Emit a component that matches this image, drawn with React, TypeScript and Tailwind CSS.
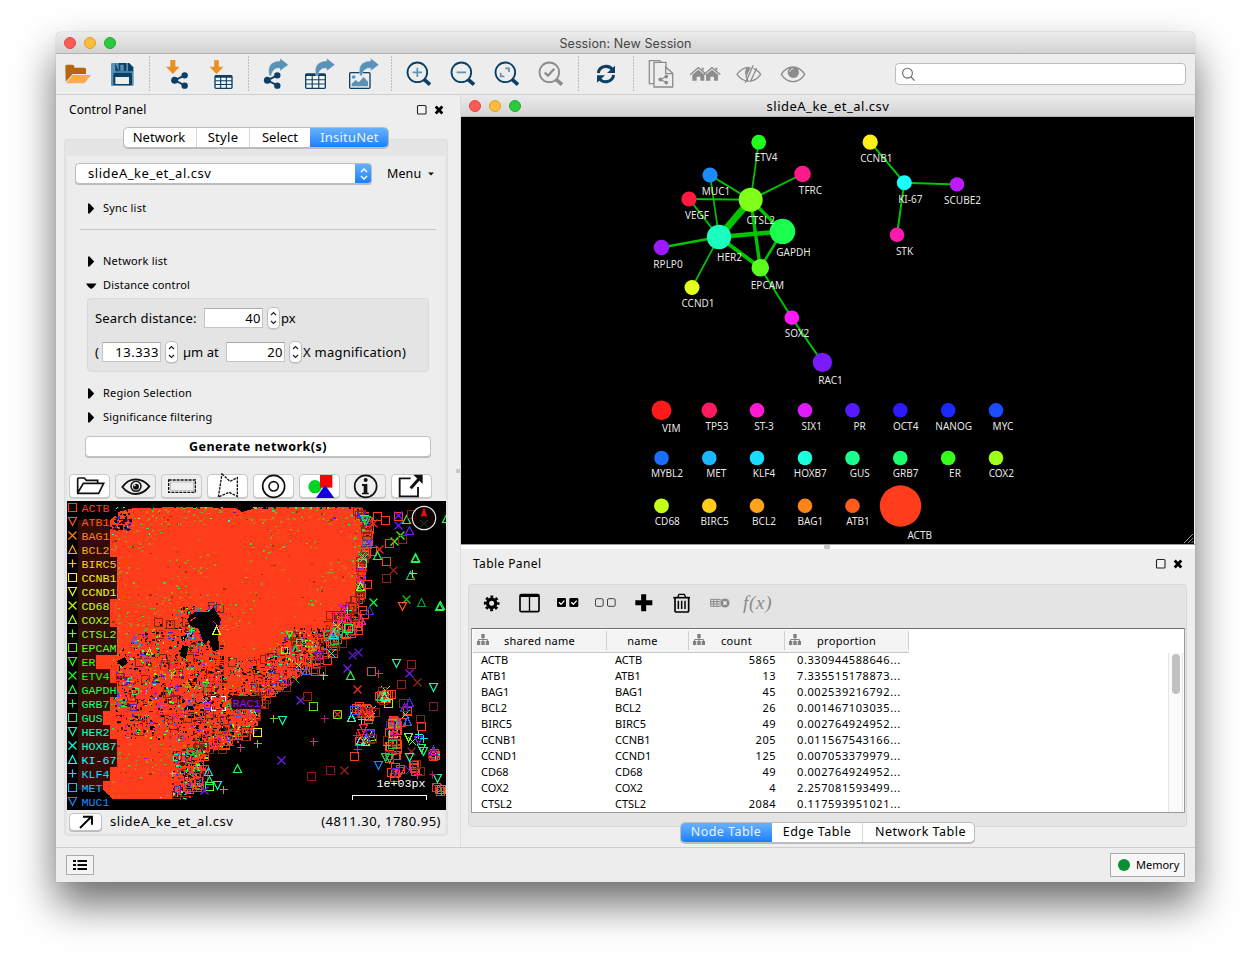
import React from "react";

const FONT = 'font-["Noto_Sans",sans-serif]';

/* ---------- small building blocks ---------- */

type ArtProps = { x: number; y: number; w: number; h: number; ox: number; oy: number; children: React.ReactNode };

/* Drawing surface w×h pixels whose user units are a third of a pixel, counted from (ox, oy). */
function Art({ x, y, w, h, ox, oy, children }: ArtProps) {
  return (
    <svg className="block shrink-0" width={w} height={h} viewBox={`${(x - ox) * 3} ${(y - oy) * 3} ${w * 3} ${h * 3}`}>
      {children}
    </svg>
  );
}

function Lights() {
  return (
    <div className="flex gap-2">
      <span className="size-3 rounded-full border border-[#e14640] bg-[#fc5b57]" />
      <span className="size-3 rounded-full border border-[#dfa023] bg-[#fdbc3e]" />
      <span className="size-3 rounded-full border border-[#1dac2b] bg-[#2bc840]" />
    </div>
  );
}

function PanelButtons() {
  return (
    <svg className="block" width="30" height="12" viewBox="0 0 30 12">
      <rect x="1.5" y="1.5" width="8.5" height="8.5" rx="1" fill="#f4f4f4" stroke="#222" strokeWidth="1.1" />
      <path d="M19.7 2.600l6.600 6.800M26.300 2.600l-6.600 6.800" stroke="#000" strokeWidth="2.8" />
    </svg>
  );
}

function Stepper() {
  return (
    <span className="flex h-[22px] w-[13px] items-center justify-center rounded-[5px] border border-[#bcbcbc] bg-white shadow-[0_1px_0_#d0d0d0]">
      <svg width="7" height="14" viewBox="0 0 7 14" fill="none" stroke="#222" strokeWidth="1.2">
        <path d="M1 4l2.5-2.5L6 4M1 10l2.5 2.5L6 10" />
      </svg>
    </span>
  );
}

function Field({ value }: { value: string }) {
  return (
    <span className="flex h-5 w-[59px] items-center justify-end border border-t-[#a9a9a9] border-[#c4c4c4] bg-white pt-[2px] pr-[1px] text-[13px] tracking-[0.5px]">
      {value}
    </span>
  );
}

function Disclosure({ open, label }: { open?: boolean; label: string }) {
  return (
    <div className="flex h-6 items-center">
      <svg className="mr-[6px] ml-px block" width="11" height="11" viewBox="0 0 11 11">
        {open ? <path d="M0 3.500h10.500L8 7 5.200 9 2.500 7z" /> : <path d="M2 .500v10h1.500L8.200 5.500 3.500 .500z" />}
      </svg>
      <span className="text-[11px] tracking-[0.2px]">{label}</span>
    </div>
  );
}

/* ---------- main toolbar ---------- */

const NAVY = "#0b3f66";
const STEEL = "#5a93b8";
const ORANGE = "#ea9020";
const GREY = "#8c8c8c";

function Sep() {
  return (
    <svg className="block shrink-0" width="3" height="40" viewBox="0 0 3 40">
      <path d="M1.5 2.5v34" stroke="#8a8a8a" strokeWidth="1" strokeDasharray="1 2" />
    </svg>
  );
}

function ShareShape({ dx = 0, dy = 0, s = 1, color = NAVY }: { dx?: number; dy?: number; s?: number; color?: string }) {
  return (
    <g transform={`translate(${dx} ${dy}) scale(${s})`} fill={color} stroke={color}>
      <path d="M41 10L11 25L41 40" fill="none" strokeWidth="5.5" />
      <circle cx="41" cy="10" r="9.5" stroke="none" />
      <circle cx="11" cy="25" r="10.5" stroke="none" />
      <circle cx="41" cy="41" r="9.5" stroke="none" />
    </g>
  );
}

function GridShape({ x, y, w, h }: { x: number; y: number; w: number; h: number }) {
  return (
    <g stroke={NAVY} strokeWidth="4" fill="#f6f6f6">
      <rect x={x} y={y} width={w} height={h} rx="3" />
      <path d={`M${x} ${y + 3}h${w}`} strokeWidth="6" />
      <path d={`M${x + w / 3} ${y}v${h}M${x + (2 * w) / 3} ${y}v${h}M${x} ${y + h * 0.4}h${w}M${x} ${y + h * 0.7}h${w}`} strokeWidth="3.4" />
    </g>
  );
}

function BendArrow({ dx }: { dx: number }) {
  return (
    <path
      transform={`translate(${dx} 0)`}
      d="M658 152C652 126 660 109 690 108V100L715 119L690 138V130C676 128 666 136 664 152Z"
      fill={STEEL}
      stroke="#eee"
      strokeWidth="1"
    />
  );
}

function Lens({ cx, color, children }: { cx: number; color: string; children: React.ReactNode }) {
  return (
    <g fill="none">
      <path d={`M${cx + 20} 163L${cx + 38} 179`} stroke={color} strokeWidth="11" />
      <circle cx={cx} cy="142" r="29.5" stroke={color} strokeWidth="5.5" />
      {children}
    </g>
  );
}

function Toolbar() {
  return (
    <div className="flex h-[41px] shrink-0 items-start border-b border-[#cfcfcf] bg-[#ededed]">
      <Art x={56} y={54} w={44} h={40} ox={50} oy={25}>
        <path d="M46 124q0-5 5-5h16q5 0 6 5v4h30q5 0 5 5v14H68L47 170z" fill="#b5660f" />
        <path d="M68 150h55L107 171q-3 4-8 4H48z" fill="#fbab52" />
      </Art>
      <Art x={100} y={54} w={48} h={40} ox={50} oy={25}>
        <path d="M186 114h52l13 13v52q0 4-4 4h-60q-4 0-4-4v-61q0-4 3-4z" fill={STEEL} />
        <path d="M196 114h41l12 13v12h-53z" fill={NAVY} />
        <path d="M196 114h10v24h28v-24h-5v23h-24z" fill={STEEL} />
        <path d="M211 119h10v18h-10z" fill={STEEL} />
        <path d="M190 147q0-4 4-4h48q4 0 4 4v33h-56z" fill={NAVY} />
        <path d="M196 156h41v21h-41z" fill="#eee" />
      </Art>
      <Sep />
      <Art x={151} y={54} w={50} h={40} ox={50} oy={25}>
        <path d="M361 105h15v20h13L368.500 147L348 125h13z" fill={ORANGE} />
        <ShareShape dx={363} dy={141} />
      </Art>
      <Art x={201} y={54} w={46} h={40} ox={50} oy={25}>
        <GridShape x={495} y={152} w={51} h={38} />
        <path d="M492 105h15v20h14L499.500 148L478 125h14z" fill={ORANGE} stroke="#eee" strokeWidth="1" />
      </Art>
      <Sep />
      <Art x={250} y={54} w={48} h={40} ox={50} oy={25}>
        <ShareShape dx={641} dy={141} />
        <BendArrow dx={0} />
      </Art>
      <Art x={298} y={54} w={44} h={40} ox={50} oy={25}>
        <GridShape x={767} y={147} w={59} h={43} />
        <BendArrow dx={140} />
      </Art>
      <Art x={342} y={54} w={48} h={40} ox={50} oy={25}>
        <rect x="899" y="143" width="61" height="47" rx="3" fill="none" stroke={NAVY} strokeWidth="4" />
        <circle cx="911" cy="156" r="5.500" fill={STEEL} />
        <path d="M905 184v-8l12-11 9 7 15-16 13 14v14z" fill={STEEL} />
        <BendArrow dx={272} />
      </Art>
      <Sep />
      <Art x={393} y={54} w={48} h={40} ox={380} oy={25}>
        <Lens cx={112} color={NAVY}><path d="M98 142h28M112 128v28" stroke={STEEL} strokeWidth="5" /></Lens>
      </Art>
      <Art x={441} y={54} w={44} h={40} ox={380} oy={25}>
        <Lens cx={244} color={NAVY}><path d="M230 142h28" stroke={STEEL} strokeWidth="5" /></Lens>
      </Art>
      <Art x={485} y={54} w={44} h={40} ox={380} oy={25}>
        <Lens cx={376} color={NAVY}><path d="M376 130h11v11M373 154h-11v-11" stroke={STEEL} strokeWidth="5" /></Lens>
      </Art>
      <Art x={529} y={54} w={48} h={40} ox={380} oy={25}>
        <Lens cx={508} color={GREY}><path d="M494 143l10 9 19-21" stroke={GREY} strokeWidth="7" /></Lens>
      </Art>
      <Sep />
      <Art x={580} y={54} w={52} h={40} ox={380} oy={25}>
        <g fill="none" stroke={NAVY} strokeWidth="9">
          <path d="M655 144C658 122 686 118 698 134" />
          <path d="M701 150C697 173 670 176 657 160" />
        </g>
        <path d="M705 122v22h-24z" fill={NAVY} />
        <path d="M651 173v-22h24z" fill={NAVY} />
      </Art>
      <Sep />
      <Art x={635} y={54} w={48} h={40} ox={380} oy={25}>
        <g fill="#ededed" stroke={GREY} strokeWidth="4">
          <path d="M822 176h-14v-69h31l9 9" />
          <path d="M822 112h36v15l20 18v41h-56z" />
          <path d="M838 112v0M857 124v22h21" fill="none" />
        </g>
        <ShareShape dx={835} dy={149} s={0.58} color={GREY} />
      </Art>
      <Art x={683} y={54} w={44} h={40} ox={380} oy={25}>
        {[0, 41].map((d) => (
          <g key={d} transform={`translate(${d} 0)`} fill={GREY}>
            <path d="M937 149l18-15 18 15v18h-12v-12h-11v12h-13z" />
            <path d="M930 149l25-21 25 21" fill="none" stroke={GREY} strokeWidth="4" />
            <path d="M965 128h6v10l-6-5z" />
          </g>
        ))}
      </Art>
      <Art x={727} y={54} w={44} h={40} ox={380} oy={25}>
        <path d="M1071 148Q1085 128 1107 127Q1098 130 1098 142Q1097 157 1104 168Q1085 167 1071 148z" fill="none" stroke={GREY} strokeWidth="4" />
        <path d="M1121 130Q1135 137 1142 148Q1130 166 1108 169" fill="none" stroke={GREY} strokeWidth="4" />
        <path d="M1120 121L1096 173M1130 130L1112 168" stroke={GREY} strokeWidth="4" />
        <path d="M1098 134q8-8 15-7l-13 26q-7-9-2-19z" fill={GREY} />
      </Art>
      <Art x={771} y={54} w={44} h={40} ox={380} oy={25}>
        <path d="M1204 148Q1218 126 1239 126T1274 148Q1260 170 1239 170T1204 148z" fill="none" stroke={GREY} strokeWidth="4" />
        <circle cx="1240" cy="142" r="17" fill={GREY} />
        <path d="M1229 141q1-10 11-10" fill="none" stroke="#eee" strokeWidth="2.500" />
      </Art>
      <div className="flex-1" />
      <div className="mt-[9px] mr-[9px] flex h-[22px] w-[291px] items-center rounded border border-[#bdbdbd] bg-white pl-[5px]">
        <svg width="15" height="15" viewBox="0 0 15 15" fill="none" stroke="#666" strokeWidth="1.1">
          <circle cx="6.500" cy="6.200" r="4.900" />
          <path d="M10 10l3.600 3.600" />
        </svg>
      </div>
    </div>
  );
}

/* ---------- gene palette ---------- */

const GENES: [string, string][] = [
  ["ACTB", "#ff3d1a"], ["ATB1", "#ff5c1a"], ["BAG1", "#ff841a"], ["BCL2", "#ffa41a"], ["BIRC5", "#ffcc1a"],
  ["CCNB1", "#fff01a"], ["CCND1", "#e6ff1a"], ["CD68", "#c4ff1a"], ["COX2", "#a0ff1a"], ["CTSL2", "#80ff1a"],
  ["EPCAM", "#59ff1a"], ["ER", "#36ff1a"], ["ETV4", "#1aff1e"], ["GAPDH", "#1aff4d"], ["GRB7", "#1aff6e"],
  ["GUS", "#1aff90"], ["HER2", "#1affc0"], ["HOXB7", "#1affdc"], ["KI-67", "#1affff"], ["KLF4", "#1adcff"],
  ["MET", "#1ab8ff"], ["MUC1", "#1a8cff"],
];

/* ---------- spatial plot ---------- */

type Kind = "s" | "v" | "x" | "t" | "p";

function glyph(k: Kind, x: number, y: number, r = 4) {
  if (k === "s") return `M${x - r} ${y - r}h${2 * r}v${2 * r}h${-2 * r}z`;
  if (k === "v") return `M${x - r} ${y - r}h${2 * r}l${-r} ${2 * r}z`;
  if (k === "t") return `M${x - r} ${y + r}h${2 * r}l${-r} ${-2 * r}z`;
  if (k === "x") return `M${x - r} ${y - r}l${2 * r} ${2 * r}m0 ${-2 * r}l${-2 * r} ${2 * r}`;
  return `M${x - r} ${y}h${2 * r}M${x} ${y - r}v${2 * r}`;
}

function rng(seed: number) {
  let a = seed;
  return () => {
    a = (a + 0x6d2b79f5) | 0;
    let t = Math.imul(a ^ (a >>> 15), 1 | a);
    t = (t + Math.imul(t ^ (t >>> 7), 61 | t)) ^ t;
    return ((t ^ (t >>> 14)) >>> 0) / 4294967296;
  };
}

const TISSUE: [number, number][] = [
  [78, 520], [110, 520], [118, 512], [134, 508], [190, 507], [236, 508], [242, 512], [260, 507], [355, 507], [360, 515], [367, 522], [366, 545], [361, 558],
  [359, 590], [352, 603], [334, 618], [328, 632], [306, 650], [294, 672], [262, 690], [252, 712], [244, 728],
  [212, 742], [192, 752], [178, 768], [184, 784], [172, 799], [112, 799], [104, 790], [78, 790],
];
const RAGGED: [number, number][] = [
  [176, 608], [220, 604], [222, 655], [240, 660], [262, 656], [278, 644], [296, 626], [326, 628], [348, 618], [332, 642], [312, 660], [296, 678], [275, 690], [253, 706],
  [252, 728], [236, 744], [216, 748], [190, 738], [160, 742], [125, 738], [112, 712], [118, 650], [146, 632],
];
const LOWER: [number, number][] = [[172, 750], [206, 746], [206, 770], [203, 784], [192, 798], [172, 800]];

function inside(poly: [number, number][], x: number, y: number) {
  let hit = false;
  for (let i = 0, j = poly.length - 1; i < poly.length; j = i++) {
    const [xi, yi] = poly[i];
    const [xj, yj] = poly[j];
    if (yi > y !== yj > y && x < ((xj - xi) * (y - yi)) / (yj - yi) + xi) hit = !hit;
  }
  return hit;
}

const RED = "#ff3d1a";
const DIM = "#8c2412";
const MIX = ["#1aff4d", "#7a1aff", "#80ff1a", "#ff1a40", "#1affc0", "#c4901a", "#1ac44d", "#ff1a8c", "#3a5cff", "#5a1ad0", "#ff2a20"];
const KINDS: Kind[] = ["s", "x", "t", "v", "p"];

function buildPlot() {
  const r = rng(4811);
  const layers: { color: string; d: string; fill: boolean }[] = [];
  const put = (color: string, fill: boolean, bucket: Record<string, string>, d: string) => {
    const key = color + (fill ? "f" : "s");
    bucket[key] = (bucket[key] ?? "") + d;
  };
  const flush = (bucket: Record<string, string>) => {
    for (const key of Object.keys(bucket)) layers.push({ color: key.slice(0, -1), d: bucket[key], fill: key.endsWith("f") });
  };
  const pick = <T,>(a: T[]) => a[Math.floor(r() * a.length)];
  const px = (a: number, b: number) => Math.floor(a + r() * (b - a)) + 0.5;

  /* fringe of open squares around the tissue */
  const fringe: Record<string, string> = {};
  for (let i = 8; i < TISSUE.length - 4; i++) {
    const [x0, y0] = TISSUE[i];
    const [x1, y1] = TISSUE[i + 1];
    const n = Math.ceil(Math.hypot(x1 - x0, y1 - y0) / 1.1);
    const spread = i < 13 ? 4 : i < 15 ? 7 : 13;
    for (let k = 0; k < n; k++) {
      const t = r();
      const x = Math.round(x0 + (x1 - x0) * t + (r() - 0.4) * spread) + 0.5;
      const y = Math.max(511.5, Math.round(y0 + (y1 - y0) * t + (r() - 0.4) * spread) + 0.5);
      if (y > 795) continue;
      const q = r();
      put(q < 0.55 ? RED : q < 0.82 ? DIM : pick(MIX), false, fringe, glyph(q < 0.82 ? "s" : pick(KINDS), x, y));
    }
  }
  flush(fringe);

  /* sparse zone: dark gaps, then overlapping markers */
  const sparse = (x: number, y: number) => inside(RAGGED, x, y) || inside(LOWER, x, y);
  const gaps: Record<string, string> = {};
  for (let i = 0; i < 2400; i++) {
    const x = px(112, 352);
    const y = px(600, 798);
    if (!sparse(x, y)) continue;
    const depth = x > 180 ? 1 : 0.5;
    if (r() > depth) continue;
    const w = 1 + Math.floor(r() * 4);
    const h = 1 + Math.floor(r() * 4);
    put(r() < 0.6 ? "#000000" : "#5a160a", true, gaps, `M${x - 0.5} ${y - 0.5}h${w}v${h}h${-w}z`);
  }
  flush(gaps);
  const marks: Record<string, string> = {};
  for (let i = 0; i < 1300; i++) {
    const x = px(114, 350);
    const y = px(604, 792);
    if (!sparse(x, y)) continue;
    const q = r();
    const color = q < 0.7 ? RED : q < 0.8 ? DIM : pick(MIX);
    put(color, false, marks, glyph(q < 0.8 ? "s" : pick(KINDS), x, y, q < 0.8 ? 4 : 3));
  }
  flush(marks);
  const top: Record<string, string> = {};
  for (let i = 0; i < 420; i++) {
    const x = px(114, 350);
    const y = px(604, 792);
    if (!sparse(x, y)) continue;
    put(RED, false, top, glyph(pick(["s", "s", "p"] as Kind[]), x, y, 3));
  }
  flush(top);

  /* specks */
  const specks: Record<string, string> = {};
  for (let i = 0; i < 6800; i++) {
    const x = px(111, 364);
    const y = px(508, 799);
    const ragged = sparse(x, y);
    if (!ragged && !inside(TISSUE, x, y)) continue;
    const edge = y < 524 || x < 130 || x > 350 || (y > 590 && y < 740 && x < 230);
    const band = Math.sin(x * 0.09 + y * 0.05) + Math.sin(y * 0.11 + x * 0.04) > 0.6;
    const keep = ragged ? 0.65 : edge ? 0.4 : band ? 0.3 : 0.06;
    if (r() > keep) continue;
    const q = r();
    const color = ragged
      ? q < 0.35 ? "#2a0b05" : pick(MIX)
      : q < 0.42 ? "#b5801c" : q < 0.7 ? "#8fa41c" : q < 0.8 ? "#1ae64d" : q < 0.94 ? "#a5300f" : pick(MIX);
    const w = 1 + Math.floor(r() * 2.3);
    const h = 1 + Math.floor(r() * 1.6);
    put(color, true, specks, `M${x - 0.5} ${y - 0.5}h${w}v${h}h${-w}z`);
  }
  for (let i = 0; i < 46; i++) {
    const x = Math.floor(112 + r() * 248);
    put(pick(["#3a0d06", "#1affc0", "#e6b41a", "#1aff4d", "#3a0d06", "#000000"]), true, specks, `M${x} 507h${1 + Math.floor(r() * 3)}v${1 + Math.floor(r() * 2)}h-2z`);
  }
  for (let i = 0; i < 60; i++) {
    const x = Math.floor(110 + r() * 20);
    const y = Math.floor(508 + r() * 22);
    put(pick(["#000000", "#3a0d06", "#5a1ad0", "#000000"]), true, specks, `M${x} ${y}h${1 + Math.floor(r() * 4)}v${1 + Math.floor(r() * 3)}h-2z`);
  }
  flush(specks);

  /* lower right cluster */
  const cluster: Record<string, string> = {};
  const spots: [number, number, number, number, number][] = [
    [385, 697, 9, 10, 18], [361, 712, 12, 8, 22], [394, 728, 6, 14, 20], [362, 740, 14, 14, 16], [391, 750, 8, 14, 16],
    [405, 710, 10, 20, 8], [418, 738, 14, 16, 5], [396, 772, 8, 8, 8], [414, 770, 8, 7, 9], [434, 753, 3, 4, 8], [439, 789, 4, 4, 6],
    [370, 712, 8, 5, 8],
  ];
  for (const [cx, cy, sx, sy, n] of spots) {
    for (let i = 0; i < n; i++) {
      const x = Math.round(cx + (r() + r() - 1) * sx) + 0.5;
      const y = Math.round(cy + (r() + r() - 1) * sy) + 0.5;
      const q = r();
      put(q < 0.45 ? RED : q < 0.58 ? DIM : pick(MIX), false, cluster, glyph(q < 0.58 ? "s" : pick(KINDS), Math.min(x, 441.5), y));
    }
  }
  for (let i = 0; i < 46; i++) {
    const t = r();
    const x = Math.round(312 + t * 46 + (r() - 0.5) * 14) + 0.5;
    const y = Math.round(670 - t * 55 + (r() - 0.5) * 20) + 0.5;
    const q = r();
    put(q < 0.45 ? RED : q < 0.7 ? DIM : pick(MIX), false, cluster, glyph(q < 0.7 ? "s" : pick(KINDS), x, y));
  }
  flush(cluster);
  return layers;
}

const LAYERS = buildPlot();

const G = "#1aff4d";
const P = "#7a1aff";
const T = "#1affa8";
const M = "#ff1a8c";
const WINE = "#8c1240";
const V = "#ff2a20";
const LONE: [Kind, number, number, string][] = [
  ["s", 377.5, 516.5, RED], ["s", 385.5, 520.5, RED], ["x", 373.5, 523.5, V], ["s", 398.5, 516.5, RED], ["x", 398.5, 525.5, P],
  ["x", 398.5, 515.5, P], ["t", 406.5, 519.5, G], ["t", 409.5, 530.5, P], ["s", 411.5, 514.5, DIM], ["t", 446.5, 518.5, G],
  ["x", 400.5, 535.5, "#36ff1a"], ["x", 394.5, 541.5, "#36ff1a"], ["s", 389.5, 543.5, RED], ["s", 402.5, 539.5, DIM], ["x", 379.5, 549.5, V],
  ["s", 372.5, 551.5, RED], ["t", 377.5, 555.5, G], ["t", 415.5, 557.5, G], ["t", 415.5, 558.5, G], ["s", 386.5, 561.5, RED], ["x", 393.5, 570.5, "#a02018"],
  ["s", 386.5, 578.5, DIM], ["t", 410.5, 575.5, "#1ac44d"], ["p", 412.5, 573.5, "#80ff1a"], ["s", 367.5, 584.5, RED], ["x", 373.5, 602.5, G],
  ["x", 406.5, 599.5, "#1ac41e"], ["v", 402.5, 606.5, "#ff5c1a"], ["t", 421.5, 602.5, "#149c38"], ["t", 439.5, 606.5, G], ["t", 440.5, 605.5, G],
  ["s", 362.5, 610.5, RED], ["t", 369.5, 610.5, "#1a3ec4"], ["s", 358.5, 630.5, RED], ["x", 352.5, 655.5, "#5a1ad0"], ["x", 358.5, 652.5, "#5a1ad0"],
  ["x", 347.5, 668.5, P], ["t", 350.5, 675.5, G], ["s", 371.5, 671.5, RED], ["p", 378.5, 673.5, M], ["v", 396.5, 663.5, T], ["s", 411.5, 664.5, DIM],
  ["x", 409.5, 673.5, P], ["s", 401.5, 684.5, DIM], ["x", 417.5, 682.5, "#a02018"], ["v", 433.5, 687.5, T], ["x", 357.5, 689.5, V],
  ["s", 433.5, 706.5, WINE], ["x", 300.5, 700.5, P], ["s", 307.5, 696.5, DIM], ["s", 313.5, 706.5, "#59e01a"], ["p", 273.5, 718.5, "#6cc41a"],
  ["v", 282.5, 720.5, T], ["p", 324.5, 718.5, "#b01a6c"], ["s", 337.5, 714.5, "#59ff1a"], ["x", 337.5, 714.5, V], ["p", 313.5, 741.5, M],
  ["x", 281.5, 760.5, P], ["s", 311.5, 776.5, WINE], ["s", 330.5, 770.5, WINE], ["x", 344.5, 770.5, "#a02018"], ["s", 257.5, 732.5, "#fff01a"],
  ["p", 257.5, 743.5, "#80c41a"], ["p", 240.5, 747.5, M], ["x", 218.5, 746.5, V], ["p", 213.5, 747.5, M], ["t", 237.5, 768.5, G],
  ["t", 208.5, 771.5, "#1adcff"], ["s", 209.5, 786.5, "#59ff1a"], ["v", 217.5, 785.5, T], ["p", 223.5, 789.5, "#c4901a"], ["x", 204.5, 790.5, P],
  ["t", 209.5, 780.5, G], ["s", 198.5, 781.5, RED], ["s", 354.5, 756.5, RED], ["v", 378.5, 765.5, "#1a8cff"], ["v", 423.5, 751.5, T],
  ["v", 437.5, 778.5, T], ["p", 423.5, 738.5, "#1adcff"], ["s", 421.5, 726.5, RED], ["s", 420.5, 719.5, DIM], ["p", 432.5, 774.5, "#b01a6c"],
  ["x", 411.5, 751.5, "#a02018"], ["v", 409.5, 757.5, T], ["s", 245.5, 731.5, DIM], ["s", 231.5, 735.5, RED], ["t", 333.5, 634.5, "#1adcff"],
];

function Plot() {
  const kinds: Kind[] = ["s", "v", "x", "t", "p"];
  return (
    <svg className="block shrink-0" width="379" height="309" viewBox="67 501 379 309" shapeRendering="crispEdges">
      <rect x="67" y="501" width="379" height="309" fill="#000" />
      <path d={"M" + TISSUE.map((p) => p.join(" ")).join("L") + "z"} fill={RED} />
      {LAYERS.map((l, i) => (
        <path key={i} d={l.d} fill={l.fill ? l.color : "none"} stroke={l.fill ? "none" : l.color} strokeWidth="1" />
      ))}
      <path d="M179 617l8 2 8-7h14l4-5 8 12-3 12 1 19-6 1-4-12-5 5-5-15-8-3-5-8zM182 645l6 2-2 12-6-3zM117 661l8-4 3 6-6 4z" fill="#000" />
      <g fill="none">
        <path d="M193 631l7 6m0-6l-7 6M190 621l6-4M213 621l6 6" stroke={V} />
        <path d={glyph("t", 216.5, 630.5)} stroke="#c4ff1a" />
        {LONE.map(([k, x, y, c], i) => (
          <path key={i} d={glyph(k, x, y)} stroke={c} shapeRendering={k === "s" || k === "p" ? "crispEdges" : "auto"} strokeWidth={k === "s" ? 1 : 1.2} />
        ))}
      </g>
      {GENES.map(([name], i) => (
        <rect key={name} x="67" y={501 + i * 14} width={14.500 + name.length * 7.1} height="14" fill="#000" fillOpacity="0.8" />
      ))}
      <g shapeRendering="auto" fill="none" strokeWidth="1.2">
        {GENES.map(([name, c], i) => (
          <path key={name} d={glyph(kinds[i % 5], 72.5, 507.5 + i * 14)} stroke={c} />
        ))}
      </g>
      <g fontFamily="'Liberation Mono', monospace" fontSize="11.700" className="whitespace-pre">
        {GENES.map(([name, c], i) => (
          <text key={name} x="81.500" y={511.500 + i * 14} fill={c}>{name}</text>
        ))}
        <rect x="232" y="696" width="29" height="13" fill="#1c0606" fillOpacity="0.9" />
        <text x="232.500" y="706.500" fill={P}>RAC1</text>
        <text x="376.500" y="787" fill="#fff">1e+03px</text>
      </g>
      <g fill="none" stroke="#fff" strokeWidth="1">
        <path d="M352.500 800v-4.500h74v4.500" />
        <path d="M211.500 700v-3.500h4M221 696.500h4.500v4M225.500 707v3.500h-4M216 710.500h-4.500v-4" />
      </g>
      <g shapeRendering="auto">
        <circle cx="424" cy="518" r="11.700" fill="#120404" fillOpacity="0.75" stroke="#e6e6e6" strokeWidth="1.2" />
        <path d="M424 507l3.500 10q-3.500-2-7 0z" fill="#e01010" />
        <path d="M420 520l8 7m0-7l-8 7" stroke="#0d4a42" fill="none" />
      </g>
    </svg>
  );
}

/* ---------- control panel ---------- */

const TOOLS: { white: boolean; art: React.ReactNode }[] = [
  { white: true, art: <path d="M53 84V42q0-3 3-3h17l6 7h34v9M53 84L70 55h61l-15 30H53z" fill="none" stroke="#111" strokeWidth="5" /> },
  {
    white: false,
    art: (
      <>
        <path d="M187 66Q203 43 227 43T268 64Q250 87 227 87T187 66z" fill="none" stroke="#111" strokeWidth="5.500" />
        <circle cx="228" cy="64" r="15" fill="none" stroke="#111" strokeWidth="4.500" />
        <circle cx="228" cy="65" r="9" fill="#111" />
        <circle cx="224" cy="61" r="3" fill="#eee" />
      </>
    ),
  },
  { white: false, art: <g fill="none" stroke="#111"><rect x="326" y="45" width="80" height="37" strokeWidth="4" strokeDasharray="9 3" /><rect x="332" y="51" width="68" height="25" stroke="#aaa" strokeWidth="2" /></g> },
  { white: true, art: <path d="M486 27L510 49L532 38V94L507 82L475 96Z" fill="none" stroke="#111" strokeWidth="4" strokeDasharray="8 3" /> },
  { white: true, art: <g fill="none" stroke="#111" strokeWidth="5"><circle cx="641" cy="64" r="33" /><circle cx="641" cy="64" r="14" /></g> },
  { white: true, art: <><circle cx="765" cy="65" r="20" fill="#00d420" /><path d="M780 30h37v38h-37z" fill="#f00" /><path d="M795 60l28 39h-55z" fill="#1400dc" /></> },
  { white: false, art: <><circle cx="917" cy="64" r="33" fill="none" stroke="#111" strokeWidth="5" /><path d="M911 57h11v26h4v5h-20v-5h5v-20h-5v-6z" fill="#111" /><circle cx="917" cy="45" r="6" fill="#111" /></> },
  { white: true, art: <><path d="M1052 40h-33v54h55V66" fill="none" stroke="#111" strokeWidth="5.500" /><path d="M1052 70L1076 43" stroke="#111" strokeWidth="9" /><path d="M1060 29h28v28z" fill="#111" /></> },
];

function ControlPanel() {
  return (
    <div className="flex w-[399px] shrink-0 flex-col">
      <div className="flex h-[29px] items-center justify-between pr-[9px] pl-[13px]">
        <span className="text-[12px] tracking-[0.1px]">Control Panel</span>
        <PanelButtons />
      </div>
      <div className="relative mt-[15px] ml-2 flex h-[697px] w-[384px] flex-col rounded-[4px] border border-[#dedede] bg-[#e5e5e5] px-[2px] pt-4 pb-[2px]">
        <div className="absolute -top-[13px] left-[58px] flex h-[21px] w-[266px] overflow-hidden rounded-[5px] border border-[#bdbdbd] bg-white text-[13px] shadow-[0_1px_0_#bbb]">
          <span className="flex w-[73px] items-center justify-center border-r border-[#d8d8d8] pr-[2px] tracking-[0.05px]">Network</span>
          <span className="flex w-[53px] items-center justify-center border-r border-[#d8d8d8] tracking-[0.3px]">Style</span>
          <span className="flex w-[60px] items-center justify-center">Select</span>
          <span className="-my-px -mr-px flex flex-1 items-center justify-center bg-linear-to-b from-[#69b3fb] to-[#0f7dfb] tracking-[0.2px] text-[#e8f3ff]">InsituNet</span>
        </div>
        <div className="flex flex-1 flex-col bg-[#ededed]">
          <div className="flex h-[35px] items-center pl-2">
            <div className="flex h-[21px] w-[297px] overflow-hidden rounded border border-[#bdbdbd] bg-white shadow-[0_1px_0_#bbb]">
              <span className="flex flex-1 items-center pl-3 text-[13px] tracking-[0.53px]">slideA_ke_et_al.csv</span>
              <span className="-my-px -mr-px flex w-[17px] items-center justify-center bg-linear-to-b from-[#69b3fb] to-[#0f7dfb]">
                <svg width="8" height="12" viewBox="0 0 8 12" fill="none" stroke="#fff" strokeWidth="1.400">
                  <path d="M1 4l3-3 3 3M1 8l3 3 3-3" />
                </svg>
              </span>
            </div>
            <span className="ml-[15px] pt-px text-[12.500px] tracking-[0.1px]">Menu</span>
            <svg className="ml-[7px]" width="7" height="4" viewBox="0 0 7 4"><path d="M0 .500h6L3 3.500z" fill="#111" /></svg>
          </div>
          <div className="mt-[5px] pl-[18px]"><Disclosure label="Sync list" /></div>
          <div className="mt-[9px] ml-[13px] h-px w-[356px] bg-[#c9c9c9]" />
          <div className="mt-[19px] pl-[18px]">
            <Disclosure label="Network list" />
            <Disclosure open label="Distance control" />
          </div>
          <div className="mt-px ml-5 flex h-[74px] w-[342px] flex-col rounded-[4px] border border-[#dadada] bg-[#e4e4e4] pl-[7px] text-[13px]">
            <div className="flex h-[38px] items-center">
              <span className="w-[109px] pt-[2px] tracking-[0.15px]">Search distance:</span>
              <Field value="40" />
              <span className="ml-1"><Stepper /></span>
              <span className="ml-px pt-[2px]">px</span>
            </div>
            <div className="flex h-[30px] items-center">
              <span className="w-[7px] pt-[2px]">(</span>
              <Field value="13.333" />
              <span className="ml-1"><Stepper /></span>
              <span className="ml-[5px] w-[43px] pt-[2px]">µm at</span>
              <Field value="20" />
              <span className="ml-1"><Stepper /></span>
              <span className="ml-px pt-[2px] tracking-[0.25px]">X magnification)</span>
            </div>
          </div>
          <div className="mt-[9px] pl-[18px]">
            <Disclosure label="Region Selection" />
            <Disclosure label="Significance filtering" />
          </div>
          <div className="mt-[7px] ml-[18px] flex h-[21px] w-[346px] items-center justify-center rounded border border-[#c2c2c2] bg-white pt-px text-[12.500px] font-bold tracking-[0.5px] shadow-[0_1px_0_#bbb]">
            Generate network(s)
          </div>
          <div className="mt-[17px] ml-[2px] flex h-[27px] gap-[5px]">
            {TOOLS.map((t, i) => (
              <div key={i} className={"flex h-[24px] w-[41px] items-center justify-center rounded border border-[#c8c8c8] shadow-[0_1px_0_#ccc] " + (t.white ? "bg-white" : "bg-[#efefef]")}>
                <Art x={69 + 46 * i} y={473} w={41} h={26} ox={60} oy={465}>{t.art}</Art>
              </div>
            ))}
          </div>
          <Plot />
          <div className="flex flex-1 items-center pr-[4px] pl-[2px] text-[13px]">
            <span className="flex h-[18px] w-[33px] items-center justify-center rounded border border-[#c2c2c2] bg-white shadow-[0_1px_0_#bbb]">
              <svg width="16" height="14" viewBox="0 0 16 14" fill="none" stroke="#000" strokeWidth="1.900">
                <path d="M2 13L13 2M5 1.700h9v8" />
              </svg>
            </span>
            <span className="ml-2 pt-px tracking-[0.53px]">slideA_ke_et_al.csv</span>
            <span className="ml-auto pt-px tracking-[0.5px]">(4811.30, 1780.95)</span>
          </div>
        </div>
      </div>
    </div>
  );
}

/* ---------- network view ---------- */

type Node = [string, number, number, number, string, number, number];

const NODES: Node[] = [
  ["ETV4", 758.7, 142.2, 7.4, "#1eff1e", 766, 157.5],
  ["TFRC", 802.5, 174, 8.3, "#ff1a8c", 810.5, 190.5],
  ["MUC1", 710, 175, 7.6, "#1a8cff", 716, 190.7],
  ["VEGF", 689, 199, 7.6, "#ff1a40", 697, 214.7],
  ["CTSL2", 750.7, 199.8, 12, "#80ff1a", 760.7, 220],
  ["GAPDH", 782.5, 231.4, 12.7, "#1aff4d", 793.5, 252.3],
  ["HER2", 719, 237, 12.2, "#1affc0", 729.5, 257.5],
  ["RPLP0", 661.5, 247.5, 7.8, "#9c1aff", 668, 263.7],
  ["EPCAM", 760.3, 267.7, 8.8, "#59ff1a", 767.5, 284.7],
  ["CCND1", 692, 287.5, 7.5, "#e6ff1a", 698, 303.3],
  ["SOX2", 791.8, 317.7, 7.3, "#ff1af8", 797, 333.2],
  ["RAC1", 822.4, 362.4, 9.6, "#7a1aff", 830.5, 380.5],
  ["CCNB1", 870.2, 142.2, 7.6, "#fff01a", 876.3, 158],
  ["KI-67", 904.3, 182.7, 7.5, "#1affff", 910.3, 198.7],
  ["SCUBE2", 957, 184.4, 7.2, "#bd1aff", 962.5, 199.8],
  ["STK", 897, 234.8, 7.3, "#ff1aaf", 904.5, 250.7],
  ["VIM", 661.5, 410.3, 9.9, "#ff1a1a", 671.3, 428.3],
  ["TP53", 709.3, 410.3, 7.8, "#ff1a62", 717, 426.3],
  ["ST-3", 757, 410.3, 7.3, "#ff1ad2", 764, 425.7],
  ["SIX1", 805, 410.3, 7.3, "#e01aff", 811.7, 425.7],
  ["PR", 852.5, 410.3, 7.3, "#551aff", 859.7, 425.7],
  ["OCT4", 900.3, 410.3, 7.3, "#2e1aff", 905.7, 425.7],
  ["NANOG", 948.2, 410.3, 7.3, "#1a29ff", 953.7, 425.7],
  ["MYC", 996, 410.3, 7.3, "#1a4dff", 1003, 425.7],
  ["MYBL2", 661.5, 458, 7.3, "#1a6eff", 667, 473.6],
  ["MET", 709.3, 458, 7.3, "#1ab8ff", 716.3, 473.6],
  ["KLF4", 757, 458, 7.3, "#1adcff", 764, 473.6],
  ["HOXB7", 805, 458, 7.3, "#1affdc", 810.3, 473.6],
  ["GUS", 852.5, 458, 7.3, "#1aff90", 859.7, 473.6],
  ["GRB7", 900.3, 458, 7.3, "#1aff6e", 905.7, 473.6],
  ["ER", 948.2, 458, 7.3, "#36ff1a", 955, 473.6],
  ["COX2", 996, 458, 7.3, "#a0ff1a", 1001.3, 473.6],
  ["CD68", 661.5, 505.8, 7.4, "#c4ff1a", 667.3, 521.3],
  ["BIRC5", 709.3, 505.8, 7.3, "#ffcc1a", 714.7, 521.3],
  ["BCL2", 757, 505.8, 7.3, "#ffa41a", 764, 521.3],
  ["BAG1", 805, 505.8, 7.3, "#ff841a", 810.3, 521.3],
  ["ATB1", 852.5, 505.8, 7.3, "#ff5c1a", 858, 521.3],
  ["ACTB", 900.5, 506, 20.7, "#ff3d1a", 919.7, 534.8],
];

const EDGES: [string, string, number][] = [
  ["ETV4", "CTSL2", 1.7], ["TFRC", "CTSL2", 1.9], ["MUC1", "CTSL2", 2], ["MUC1", "HER2", 1.7], ["VEGF", "CTSL2", 2],
  ["VEGF", "HER2", 1.9], ["CTSL2", "HER2", 7], ["CTSL2", "GAPDH", 3.4], ["CTSL2", "EPCAM", 3.4], ["HER2", "GAPDH", 4.6],
  ["HER2", "EPCAM", 3.8], ["GAPDH", "EPCAM", 2.6], ["RPLP0", "HER2", 2.3], ["CCND1", "HER2", 1.7], ["EPCAM", "SOX2", 1.9],
  ["SOX2", "RAC1", 2], ["CCNB1", "KI-67", 2], ["KI-67", "SCUBE2", 2], ["KI-67", "STK", 2],
];

const AT: Record<string, Node> = Object.fromEntries(NODES.map((n) => [n[0], n]));

function NetworkView() {
  return (
    <div className="flex h-[450px] shrink-0 flex-col border-b border-[#9c9c9c]">
      <div className="relative flex h-[22px] shrink-0 items-center border-b border-[#b5b5b5] bg-linear-to-b from-[#ebebeb] to-[#d4d4d4] pl-2">
        <Lights />
        <span className="absolute inset-x-0 pt-[3px] text-center text-[13px] tracking-[0.5px]">slideA_ke_et_al.csv</span>
      </div>
      <svg className="block" width="734" height="427" viewBox="461 117 734 427">
        <rect x="461" y="117" width="733" height="427" fill="#000" />
        {EDGES.map(([a, b, w]) => (
          <line key={a + b} x1={AT[a][1]} y1={AT[a][2]} x2={AT[b][1]} y2={AT[b][2]} stroke="#00c400" strokeWidth={w} />
        ))}
        {NODES.map(([name, x, y, r, c]) => <circle key={name} cx={x} cy={y} r={r} fill={c} />)}
        <g fill="#fff" fillOpacity="0.92" fontSize="10" textAnchor="middle">
          {NODES.map(([name, , , , , lx, ly]) => <text key={name} x={lx} y={ly + 3.8}>{name}</text>)}
        </g>
        <path d="M1184 543l9-9M1188 543l5-5M1191.500 543l2-2" stroke="#999" strokeWidth="1" />
      </svg>
    </div>
  );
}

/* ---------- table panel ---------- */

const ROWS: [string, string, string][] = [
  ["ACTB", "5865", "0.330944588646..."],
  ["ATB1", "13", "7.335515178873..."],
  ["BAG1", "45", "0.002539216792..."],
  ["BCL2", "26", "0.001467103035..."],
  ["BIRC5", "49", "0.002764924952..."],
  ["CCNB1", "205", "0.011567543166..."],
  ["CCND1", "125", "0.007053379979..."],
  ["CD68", "49", "0.002764924952..."],
  ["COX2", "4", "2.257081593499..."],
  ["CTSL2", "2084", "0.117593951021..."],
];

function TreeIcon() {
  return (
    <svg className="absolute top-[3px] left-1" width="12" height="12" viewBox="0 0 12 12" fill="#808080">
      <path d="M4.300 0h3.400v4H4.300zM0 7h3.300v4H0zM4.300 7h3.400v4H4.300zM8.700 7H12v4H8.700z" />
      <path d="M6 4v3M1.600 7V5.500h8.800V7" fill="none" stroke="#808080" />
    </svg>
  );
}

function TableTools() {
  return (
    <div className="flex h-[43px] items-center pb-[7px]">
      <Art x={471} y={588} w={40} h={30} ox={460} oy={540}>
        <circle cx="95" cy="190" r="12.500" fill="none" stroke="#000" strokeWidth="10" />
        <circle cx="95" cy="190" r="20" fill="none" stroke="#000" strokeWidth="7" strokeDasharray="8.500 7.208" strokeDashoffset="4.250" />
      </Art>
      <Art x={511} y={588} w={40} h={30} ox={460} oy={540}>
        <rect x="180" y="164" width="57" height="51" rx="4" fill="none" stroke="#000" strokeWidth="5" />
        <path d="M180 167h57" stroke="#000" strokeWidth="8" />
        <path d="M208.500 167v48" stroke="#000" strokeWidth="4" />
      </Art>
      <Art x={551} y={588} w={38} h={30} ox={460} oy={540}>
        {[291, 328].map((x) => (
          <g key={x}>
            <rect x={x} y="174" width="27" height="27" rx="4" />
            <path d={`M${x + 6} 187l6 6 10-11`} fill="none" stroke="#fff" strokeWidth="4" />
          </g>
        ))}
      </Art>
      <Art x={589} y={588} w={36} h={30} ox={460} oy={540}>
        <rect x="406.500" y="176" width="23" height="23" rx="4" fill="none" stroke="#444" strokeWidth="3" />
        <rect x="442.500" y="176" width="23" height="23" rx="4" fill="none" stroke="#444" strokeWidth="3" />
      </Art>
      <Art x={625} y={588} w={38} h={30} ox={460} oy={540}>
        <path d="M551 163v51M526 188h51" stroke="#000" strokeWidth="15" strokeLinejoin="round" />
      </Art>
      <Art x={663} y={588} w={38} h={30} ox={460} oy={540}>
        <g fill="none" stroke="#000">
          <path d="M640 173h50" strokeWidth="5" />
          <path d="M653 172l4-9h16l4 9" strokeWidth="4" />
          <path d="M645 174v38q0 4 4 4h33q4 0 4-4v-38" strokeWidth="5" />
          <path d="M655 182v25M665 182v25M675 182v25" strokeWidth="4.500" />
        </g>
      </Art>
      <Art x={701} y={588} w={36} h={30} ox={460} oy={540}>
        <path d="M752 178h29v21h-29zM752 185h29M752 192h29M761 178v21M771 178v21" fill="none" stroke="#888" strokeWidth="3" />
        <circle cx="795" cy="189" r="14.500" fill="#888" stroke="#e4e4e4" strokeWidth="2" />
        <path d="M790 184l10 10m0-10l-10 10" stroke="#f2f2f2" strokeWidth="4" />
      </Art>
      <span className='ml-[6px] font-["Liberation_Serif",serif] text-[19px] italic tracking-[0.7px] text-[#8a8a8a]'>f(x)</span>
    </div>
  );
}

function TablePanel() {
  return (
    <div className="flex flex-1 flex-col border-t-[4px] border-white">
      <div className="flex h-[29px] items-center justify-between pr-[10px] pl-3">
        <span className="text-[12px] tracking-[0.4px]">Table Panel</span>
        <PanelButtons />
      </div>
      <div className="relative mt-[6px] ml-[7px] h-[243px] w-[719px] rounded-[4px] border border-[#d9d9d9] bg-[#e4e4e4] px-[2px]">
        <TableTools />
        <div className="flex h-[185px] w-[714px] flex-col border border-t-[#6e6e6e] border-[#9a9a9a] bg-white pt-px pl-px text-[11px]">
          <div className="flex h-[23px] w-[436px] shrink-0 border-b border-[#c9c9c9] bg-[#f4f4f4] pt-px pb-[2px] tracking-[0.3px]">
            <span className="relative flex w-[134px] items-center justify-center border-r border-[#cfcfcf] pt-[2px]"><TreeIcon />shared name</span>
            <span className="relative flex w-[82px] items-center justify-center border-r border-[#cfcfcf] pt-[2px] pr-[10px]">name</span>
            <span className="relative flex w-[96px] items-center justify-center border-r border-[#cfcfcf] pt-[2px]"><TreeIcon />count</span>
            <span className="relative flex flex-1 items-center justify-center border-r border-[#cfcfcf] pt-[2px]"><TreeIcon />proportion</span>
          </div>
          <div className="flex min-h-0 flex-1 justify-between">
            <div className="-mt-px flex flex-col">
              {ROWS.map(([name, count, share]) => (
                <div key={name} className="flex h-4 shrink-0 items-center">
                  <span className="w-[142px] pl-2">{name}</span>
                  <span className="w-[60px]">{name}</span>
                  <span className="w-[101px] text-right tracking-[0.5px]">{count}</span>
                  <span className="pl-[21px] tracking-[0.6px]">{share}</span>
                </div>
              ))}
            </div>
            <div className="mr-px w-[15px] border-x border-[#e6e6e6] bg-[#fafafa] pt-px pl-[3px]">
              <div className="h-10 w-2 rounded-full bg-[#c1c1c1]" />
            </div>
          </div>
        </div>
        <div className="absolute -bottom-[17px] left-[211px] flex h-[21px] w-[295px] overflow-hidden rounded-[5px] border border-[#bdbdbd] bg-white text-[12.500px] tracking-[0.3px] shadow-[0_1px_0_#bbb]">
          <span className="-my-px -ml-px flex w-[92px] items-center justify-center bg-linear-to-b from-[#69b3fb] to-[#0f7dfb] tracking-[0.45px] text-[#e8f3ff]">Node Table</span>
          <span className="flex w-[91px] items-center justify-center border-r border-[#d8d8d8] tracking-[0.5px]">Edge Table</span>
          <span className="flex flex-1 items-center justify-center pl-1 tracking-[0.5px]">Network Table</span>
        </div>
      </div>
    </div>
  );
}

/* ---------- window ---------- */

export default function App() {
  return (
    <div className={`h-[962px] w-[1251px] overflow-hidden bg-white pt-8 pl-14 text-black ${FONT} whitespace-nowrap`}>
      <div className="flex h-[850px] w-[1139px] flex-col overflow-hidden rounded-t-[5px] bg-[#eeeeee] shadow-[0_0_1px_#777,0_22px_42px_rgba(0,0,0,0.58)]">
        <div className="relative flex h-[22px] shrink-0 items-center border-b border-[#b1b1b1] bg-linear-to-b from-[#ececec] to-[#d2d2d2] pl-2">
          <Lights />
          <span className='absolute inset-x-0 pt-[3px] text-center font-["Inter",sans-serif] text-[12.500px] tracking-[0.1px] text-[#454545]'>Session: New Session</span>
        </div>
        <Toolbar />
        <div className="flex min-h-0 flex-1">
          <ControlPanel />
          <div className="flex w-[6px] shrink-0 flex-col justify-center border-r border-[#dcdcdc]">
            <div className="mx-auto size-[4px] rounded-[1px] bg-[#c6c6c6]" />
          </div>
          <div className="relative flex w-[734px] flex-col">
            <NetworkView />
            <TablePanel />
            <span className="absolute top-[450px] left-[363px] h-1 w-[6px] rounded-[1px] bg-[#c6c6c6]" />
          </div>
        </div>
        <div className="flex h-[35px] shrink-0 items-center justify-between border-t border-[#cdcdcd] bg-[#ededed] pr-[10px] pl-[10px]">
          <span className="flex h-5 w-7 items-center justify-center border border-[#a9a9a9] bg-[#f4f4f4]">
            <svg width="14" height="12" viewBox="0 0 14 12">
              <path d="M0 2h3M0 6h3M0 10h3M4.500 2H14M4.500 6H14M4.500 10H14" stroke="#000" strokeWidth="2" />
            </svg>
          </span>
          <span className="flex h-6 w-[75px] items-center border border-[#a9a9a9] bg-[#f7f7f7] pl-[7px] text-[11px]">
            <span className="mr-[6px] size-3 rounded-full bg-[#0a8f35]" />
            Memory
          </span>
        </div>
      </div>
    </div>
  );
}
